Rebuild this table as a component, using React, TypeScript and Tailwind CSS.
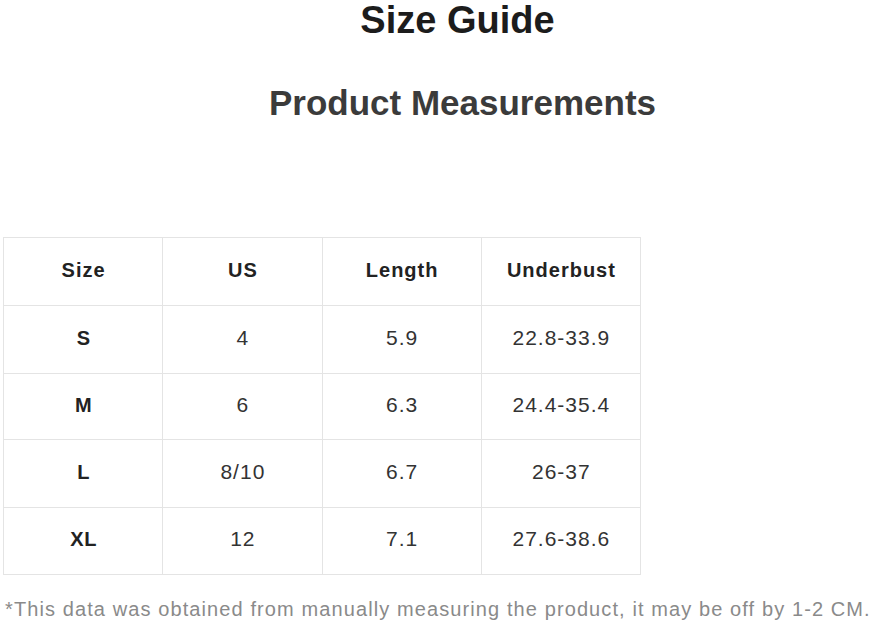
const headers = ['Size', 'US', 'Length', 'Underbust'];

const rows = [
  { size: 'S', us: '4', length: '5.9', underbust: '22.8-33.9', h: 'h-[68px]' },
  { size: 'M', us: '6', length: '6.3', underbust: '24.4-35.4', h: 'h-[66px]' },
  { size: 'L', us: '8/10', length: '6.7', underbust: '26-37', h: 'h-[68px]' },
  { size: 'XL', us: '12', length: '7.1', underbust: '27.6-38.6', h: 'h-[67px]' },
];

const App = () => {
  return (
    <div className="w-[871px] h-[625px] bg-white overflow-hidden font-['Liberation_Sans',Arial,sans-serif]">
      {/* Titles */}
      <div className="pl-[44px] text-center">
        <h1 className="text-[38px] leading-[40px] font-bold text-[#1c1c1c]">Size Guide</h1>
        <h2 className="mt-[41px] pl-[10px] text-[35px] leading-[44px] font-bold text-[#3b3b3b]">
          Product Measurements
        </h2>
      </div>

      {/* Measurements table */}
      <table className="mt-[112px] ml-[3px] w-[638px] border-collapse table-fixed">
        <thead>
          <tr className="h-[68px]">
            {headers.map((h) => (
              <th key={h} className="border border-[#e4e4e4] pb-[4px] pl-[1px] text-[20px] tracking-[1px] font-bold text-[#222]">
                {h}
              </th>
            ))}
          </tr>
        </thead>
        <tbody>
          {rows.map((r) => (
            <tr key={r.size} className={r.h}>
              <td className="border border-[#e4e4e4] pb-[4px] pl-[1px] text-center text-[20px] tracking-[0.5px] font-bold text-[#222]">{r.size}</td>
              <td className="border border-[#e4e4e4] pb-[4px] pl-[1px] text-center text-[21px] tracking-[1px] text-[#333]">{r.us}</td>
              <td className="border border-[#e4e4e4] pb-[4px] pl-[1px] text-center text-[21px] tracking-[1px] text-[#333]">{r.length}</td>
              <td className="border border-[#e4e4e4] pb-[4px] pl-[1px] text-center text-[21px] tracking-[1px] text-[#333]">{r.underbust}</td>
            </tr>
          ))}
        </tbody>
      </table>

      <p className="mt-[23px] pl-[5px] text-[20px] leading-[22px] tracking-[1.1px] text-[#8a8a8a] whitespace-nowrap">
        *This data was obtained from manually measuring the product, it may be off by 1-2 CM.
      </p>
    </div>
  );
};

export default App;
